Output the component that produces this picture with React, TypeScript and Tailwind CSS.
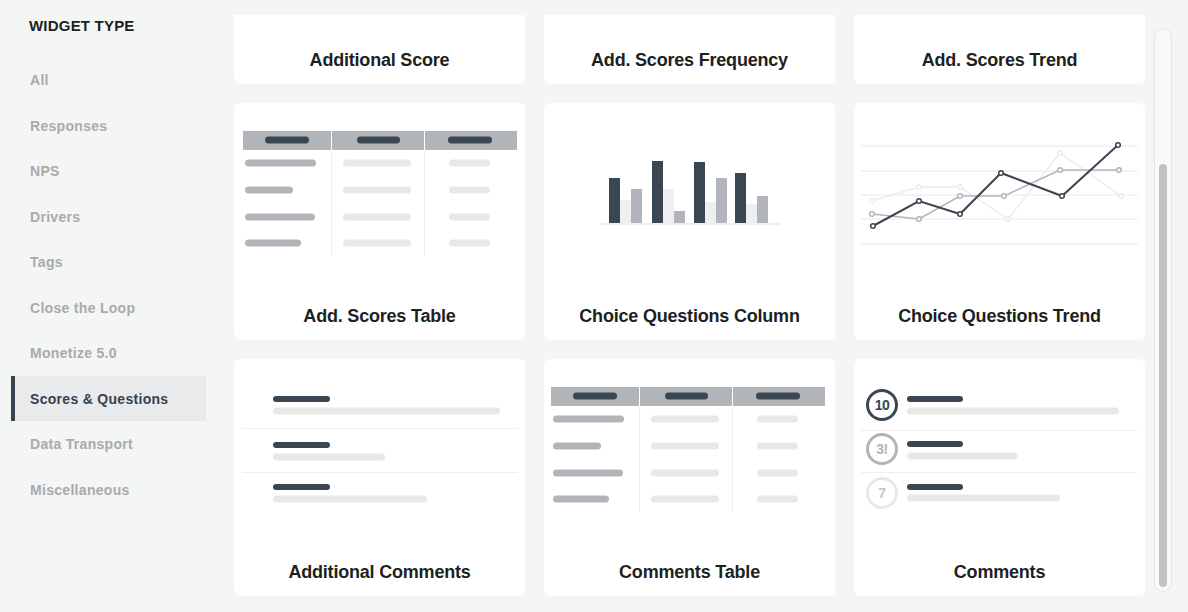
// Widget type picker — sidebar de categorías y rejilla de tarjetas con vista previa.
import { useLayoutEffect, useRef } from 'react';

const DARK = '#3a4652';
const MID = '#b1b5b9';
const LIGHT = '#e8e8e8';
const RULE = '#efefef';

const categories = [
  'All', 'Responses', 'NPS', 'Drivers', 'Tags', 'Close the Loop',
  'Monetize 5.0', 'Scores & Questions', 'Data Transport', 'Miscellaneous',
];

function Pill({ x, y, w, h = 7, color }: { x: number; y: number; w: number; h?: number; color: string }) {
  return <rect x={x} y={y - h / 2} width={w} height={h} rx={h / 2} fill={color} />;
}

function TablePreview({ dx = 0 }: { dx?: number }) {
  const left = [71, 48, 70, 56];
  const ys = [60, 87, 114, 140];
  return (
    <g transform={`translate(${dx} 0)`}>
      <rect x={9} y={28} width={274} height={19} fill={MID} />
      <line x1={97.5} y1={28} x2={97.5} y2={47} stroke="#fff" />
      <line x1={190.5} y1={28} x2={190.5} y2={47} stroke="#fff" />
      <line x1={97.5} y1={47} x2={97.5} y2={153} stroke={RULE} />
      <line x1={190.5} y1={47} x2={190.5} y2={153} stroke={RULE} />
      <Pill x={31} y={37} w={44} color={DARK} />
      <Pill x={123} y={37} w={43} color={DARK} />
      <Pill x={214} y={37} w={44} color={DARK} />
      {ys.map((y, i) => (
        <g key={i}>
          <Pill x={11} y={y} w={left[i]} color={MID} />
          <Pill x={109} y={y} w={68} color={LIGHT} />
          <Pill x={215} y={y} w={41} color={LIGHT} />
        </g>
      ))}
    </g>
  );
}

function ColumnPreview() {
  const groups = [
    { x: 65, tops: [75, 97, 86] },
    { x: 108, tops: [58, 86, 108] },
    { x: 150, tops: [59, 99, 75] },
    { x: 191, tops: [70, 101, 93] },
  ];
  const fills = [DARK, RULE, MID];
  return (
    <g>
      <rect x={56} y={120} width={180} height={2} fill={RULE} />
      {groups.map((g, i) =>
        g.tops.map((t, j) => (
          <rect key={`${i}-${j}`} x={g.x + j * 11} y={t} width={11} height={120 - t} fill={fills[j]} />
        )),
      )}
    </g>
  );
}

function TrendPreview() {
  const grid = [43, 68, 92, 116, 141];
  const series = [
    { c: '#ececec', w: 1.5, pts: [[18, 98], [65, 84], [106, 84], [154, 116], [206, 50], [267, 93]] },
    { c: MID, w: 1.5, pts: [[18, 111], [65, 116], [106, 93], [150, 93], [206, 67], [265, 67]] },
    { c: DARK, w: 2, pts: [[19, 123], [65, 98], [106, 111], [147, 70], [208, 93], [264, 42]] },
  ];
  return (
    <g>
      {grid.map((y) => (
        <line key={y} x1={7} y1={y} x2={284} y2={y} stroke="#f0f0f0" strokeWidth={1.5} />
      ))}
      {series.map((s, i) => (
        <g key={i}>
          <polyline points={s.pts.map((p) => p.join(',')).join(' ')} fill="none" stroke={s.c} strokeWidth={s.w} />
          {s.pts.map(([x, y], k) => (
            <circle key={k} cx={x} cy={y} r={2.3} fill="#fff" stroke={s.c} strokeWidth={1.5} />
          ))}
        </g>
      ))}
    </g>
  );
}

function ListPreview() {
  const rows = [
    { d: 40, l: 52, w: 227 },
    { d: 86, l: 98, w: 112 },
    { d: 128, l: 140, w: 154 },
  ];
  return (
    <g>
      <line x1={8} y1={69.5} x2={284} y2={69.5} stroke={RULE} />
      <line x1={8} y1={113.5} x2={284} y2={113.5} stroke={RULE} />
      {rows.map((r, i) => (
        <g key={i}>
          <Pill x={39} y={r.d} w={57} h={6} color={DARK} />
          <Pill x={39} y={r.l} w={r.w} color={LIGHT} />
        </g>
      ))}
    </g>
  );
}

function CommentsPreview() {
  const rows = [
    { cy: 46, d: 40, l: 52, w: 212, ring: DARK, txt: DARK, label: '10' },
    { cy: 90, d: 85, l: 97, w: 111, ring: MID, txt: MID, label: '3!' },
    { cy: 134, d: 128, l: 139, w: 153, ring: LIGHT, txt: '#c4c4c4', label: '7' },
  ];
  return (
    <g>
      <line x1={7} y1={71.5} x2={283} y2={71.5} stroke={RULE} />
      <line x1={7} y1={113.5} x2={283} y2={113.5} stroke={RULE} />
      {rows.map((r, i) => (
        <g key={i}>
          <circle cx={28} cy={r.cy} r={14.5} fill="#fff" stroke={r.ring} strokeWidth={3} />
          <text
            x={28}
            y={r.cy + 5}
            textAnchor="middle"
            fontSize={14}
            fontWeight={700}
            fill={r.txt}
            fontFamily="'Liberation Sans', Arial, sans-serif"
            letterSpacing={-0.5}
          >
            {r.label}
          </text>
          <Pill x={53} y={r.d} w={56} h={6} color={DARK} />
          <Pill x={53} y={r.l} w={r.w} color={LIGHT} />
        </g>
      ))}
    </g>
  );
}

const cards: { title: string; preview?: JSX.Element }[] = [
  { title: 'Additional Score' },
  { title: 'Add. Scores Frequency' },
  { title: 'Add. Scores Trend' },
  { title: 'Add. Scores Table', preview: <TablePreview /> },
  { title: 'Choice Questions Column', preview: <ColumnPreview /> },
  { title: 'Choice Questions Trend', preview: <TrendPreview /> },
  { title: 'Additional Comments', preview: <ListPreview /> },
  { title: 'Comments Table', preview: <TablePreview dx={-2} /> },
  { title: 'Comments', preview: <CommentsPreview /> },
];

function WidgetCard({ title, preview }: { title: string; preview?: JSX.Element }) {
  return (
    <div className="flex h-[237px] flex-col rounded-md bg-white">
      <svg width={291} height={190} viewBox="0 0 291 190" className="shrink-0">
        {preview}
      </svg>
      <div className="mt-auto pb-[13px] text-center text-[18px] font-bold leading-[22px] tracking-[-0.2px] text-[#1e1f21]">
        {title}
      </div>
    </div>
  );
}

export default function App() {
  const scroller = useRef<HTMLDivElement>(null);

  useLayoutEffect(() => {
    if (scroller.current) scroller.current.scrollTop = 168;
  }, []);

  return (
    <div className="flex h-[612px] w-[1188px] overflow-hidden bg-[#f4f5f5] font-['Liberation_Sans',Arial,sans-serif]">
      {/* Sidebar */}
      <aside className="w-[206px] shrink-0 pl-[11px] pt-[17px]">
        <div className="pl-[18px] text-[15px] font-bold leading-[18px] tracking-[0.2px] text-[#1e1f21]">WIDGET TYPE</div>
        <ul className="mt-[22.25px]">
          {categories.map((c) => {
            const active = c === 'Scores & Questions';
            return (
              <li
                key={c}
                className={
                  active
                    ? 'flex h-[45.5px] items-center border-l-4 border-[#36424e] bg-[#e9eaec] pl-[15px] text-[14px] font-bold leading-[16px] tracking-[0.3px] text-[#36414c]'
                    : 'flex h-[45.5px] items-center border-l-4 border-transparent pl-[15px] text-[14px] font-bold leading-[16px] tracking-[0.3px] text-[#a9aaac]'
                }
              >
                {c}
              </li>
            );
          })}
        </ul>
      </aside>

      {/* Grid de widgets */}
      <div ref={scroller} className="ml-[28px] mt-[15px] h-[597px] w-[911px] shrink-0 overflow-hidden">
        <div className="grid grid-cols-3 gap-[19px] pb-[60px]">
          {cards.map((c) => (
            <WidgetCard key={c.title} title={c.title} preview={c.preview} />
          ))}
        </div>
      </div>

      {/* Scrollbar */}
      <div className="ml-[9px] mt-[28px] h-[564px] w-[18px] shrink-0 rounded-full border border-[#e2e3e3] bg-[#f9f9f9] pl-[4px] pt-[135px]">
        <div className="h-[423px] w-[8px] rounded-full bg-[#c2c2c2]" />
      </div>
    </div>
  );
}
